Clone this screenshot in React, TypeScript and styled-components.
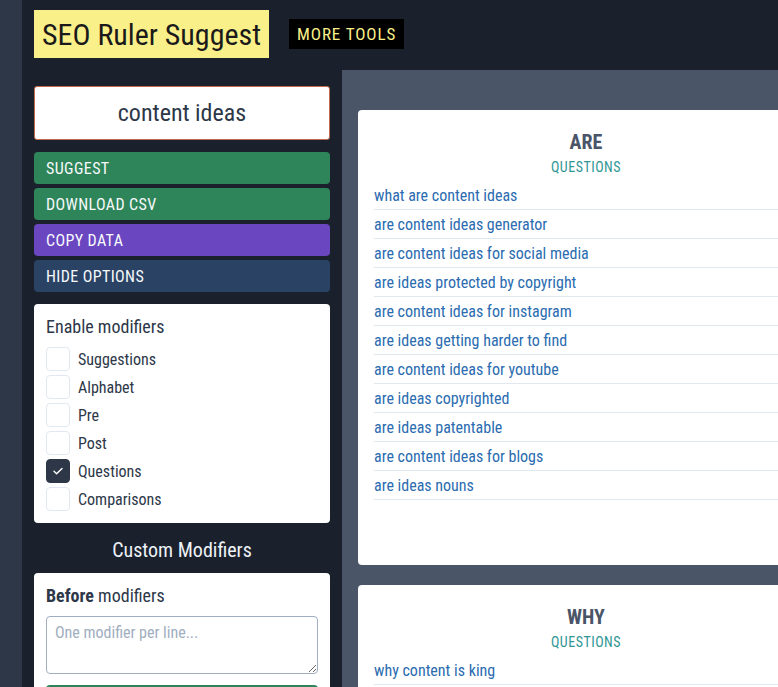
import React from "react";
import styled, { createGlobalStyle } from "styled-components";

const GlobalStyle = createGlobalStyle`
  html, body {
    margin: 0;
    padding: 0;
    overflow: hidden;
    background: #1a202c;
  }
  body {
    font-family: "Roboto Condensed", Roboto, "Liberation Sans", sans-serif;
    font-stretch: condensed;
  }
  * {
    box-sizing: border-box;
  }
`;

const Page = styled.div`
  display: flex;
  min-height: 100vh;
  width: 900px;
`;

const Rail = styled.div`
  width: 22px;
  flex-shrink: 0;
  background: #2d3748;
`;

const Main = styled.div`
  flex: 1;
  display: flex;
  flex-direction: column;
  background: #1a202c;
`;

const Header = styled.header`
  display: flex;
  align-items: center;
  gap: 20px;
  height: 70px;
  padding: 0 12px 2px;
`;

const Logo = styled.h1`
  margin: 0;
  height: 48px;
  padding: 0 8px;
  display: flex;
  align-items: center;
  background: #faf089;
  color: #1a1a1a;
  font-size: 30px;
  font-weight: 400;
`;

const MoreTools = styled.a`
  height: 30px;
  padding: 0 8px;
  display: flex;
  align-items: center;
  background: #000;
  color: #faf089;
  font-size: 17px;
  letter-spacing: 0.9px;
`;

const Body = styled.div`
  flex: 1;
  display: flex;
  align-items: stretch;
`;

const Sidebar = styled.aside`
  width: 296px;
  flex-shrink: 0;
  margin: 0 12px;
  padding-top: 16px;
  display: flex;
  flex-direction: column;
`;

const KeywordInput = styled.input`
  width: 100%;
  height: 54px;
  border: 1px solid #c26a4c;
  border-radius: 3px;
  background: #fff;
  color: #2d3748;
  text-align: center;
  font-family: inherit;
  font-stretch: inherit;
  font-size: 24px;
  outline: none;
`;

const Buttons = styled.div`
  display: flex;
  flex-direction: column;
  gap: 4px;
  margin-top: 12px;
`;

const ActionButton = styled.button<{ $bg: string }>`
  height: 32px;
  padding: 0 12px;
  border: none;
  border-radius: 4px;
  background: ${(p) => p.$bg};
  color: #f7fafc;
  text-align: left;
  font-family: inherit;
  font-stretch: inherit;
  font-size: 16px;
  letter-spacing: 0.4px;
`;

const Panel = styled.div`
  background: #fff;
  border-radius: 4px;
  padding: 12px;
  color: #2d3748;
`;

const ModPanel = styled(Panel)`
  margin-top: 12px;
`;

const PanelTitle = styled.div`
  font-size: 18px;
  line-height: 22px;
  margin-bottom: 9px;
`;

const CheckList = styled.div`
  display: flex;
  flex-direction: column;
  gap: 4px;
`;

const CheckRow = styled.label`
  display: flex;
  align-items: center;
  gap: 8px;
  font-size: 16px;
  color: #2d3748;
`;

const Box = styled.span<{ $on?: boolean }>`
  width: 24px;
  height: 24px;
  border-radius: 4px;
  border: 1px solid ${(p) => (p.$on ? "#2d3748" : "#e2e8f0")};
  background: ${(p) => (p.$on ? "#2d3748" : "#fff")};
  display: flex;
  align-items: center;
  justify-content: center;
`;

const SectionTitle = styled.div`
  color: #edf2f7;
  text-align: center;
  font-size: 20px;
  line-height: 26px;
  padding: 14px 0 10px;
`;

const Notes = styled.textarea`
  display: block;
  width: 100%;
  height: 58px;
  margin: 0;
  padding: 6px 8px;
  border: 1px solid #a0aec0;
  border-radius: 4px;
  font-family: inherit;
  font-stretch: inherit;
  font-size: 16px;
  color: #2d3748;
  resize: vertical;
  &::placeholder {
    color: #a0aec0;
  }
`;

const SaveButton = styled(ActionButton)`
  width: 100%;
  margin-top: 11px;
`;

const Results = styled.section`
  flex: 1;
  background: #4a5568;
  padding: 40px 16px 20px;
  display: flex;
  flex-direction: column;
  gap: 20px;
`;

const Card = styled.div`
  width: 456px;
  min-height: 455px;
  background: #fff;
  border-radius: 4px;
  padding: 20px 16px 16px;
`;

const CardTitle = styled.div`
  text-align: center;
  color: #4a5568;
  font-weight: 700;
  font-size: 20px;
  line-height: 24px;
`;

const CardTag = styled.div`
  text-align: center;
  color: #319795;
  font-size: 14px;
  line-height: 20px;
  letter-spacing: 0.5px;
  margin: 3px 0 4px;
`;

const Item = styled.a`
  display: block;
  padding-top: 2px;
  line-height: 26px;
  border-bottom: 1px solid #e2e8f0;
  color: #2b6cb0;
  font-size: 16px;
  text-decoration: none;
`;

const modifiers = [
  { label: "Suggestions", on: false },
  { label: "Alphabet", on: false },
  { label: "Pre", on: false },
  { label: "Post", on: false },
  { label: "Questions", on: true },
  { label: "Comparisons", on: false },
];

const groups = [
  {
    word: "ARE",
    items: [
      "what are content ideas",
      "are content ideas generator",
      "are content ideas for social media",
      "are ideas protected by copyright",
      "are content ideas for instagram",
      "are ideas getting harder to find",
      "are content ideas for youtube",
      "are ideas copyrighted",
      "are ideas patentable",
      "are content ideas for blogs",
      "are ideas nouns",
    ],
  },
  {
    word: "WHY",
    items: ["why content is king", "why content ideas matter"],
  },
];

const Check = () => (
  <svg width="12" height="12" viewBox="0 0 12 12" fill="none">
    <path d="M2 6.2l2.6 2.6L10 3.4" stroke="#fff" strokeWidth="1.4" strokeLinecap="round" strokeLinejoin="round" />
  </svg>
);

export default function App() {
  return (
    <>
      <GlobalStyle />
      <Page>
        <Rail />
        <Main>
          <Header>
            <Logo>SEO Ruler Suggest</Logo>
            <MoreTools>MORE TOOLS</MoreTools>
          </Header>
          <Body>
            <Sidebar>
              <KeywordInput defaultValue="content ideas" />
              <Buttons>
                <ActionButton $bg="#2f855a">SUGGEST</ActionButton>
                <ActionButton $bg="#2f855a">DOWNLOAD CSV</ActionButton>
                <ActionButton $bg="#6b46c1">COPY DATA</ActionButton>
                <ActionButton $bg="#2a4365">HIDE OPTIONS</ActionButton>
              </Buttons>
              <ModPanel>
                <PanelTitle>Enable modifiers</PanelTitle>
                <CheckList>
                  {modifiers.map((m) => (
                    <CheckRow key={m.label}>
                      <Box $on={m.on}>{m.on && <Check />}</Box>
                      {m.label}
                    </CheckRow>
                  ))}
                </CheckList>
              </ModPanel>
              <SectionTitle>Custom Modifiers</SectionTitle>
              <Panel>
                <PanelTitle>
                  <b>Before</b> modifiers
                </PanelTitle>
                <Notes placeholder="One modifier per line..." />
                <SaveButton $bg="#2f855a">SAVE</SaveButton>
              </Panel>
            </Sidebar>
            <Results>
              {groups.map((g) => (
                <Card key={g.word}>
                  <CardTitle>{g.word}</CardTitle>
                  <CardTag>QUESTIONS</CardTag>
                  {g.items.map((t) => (
                    <Item key={t}>{t}</Item>
                  ))}
                </Card>
              ))}
            </Results>
          </Body>
        </Main>
      </Page>
    </>
  );
}
